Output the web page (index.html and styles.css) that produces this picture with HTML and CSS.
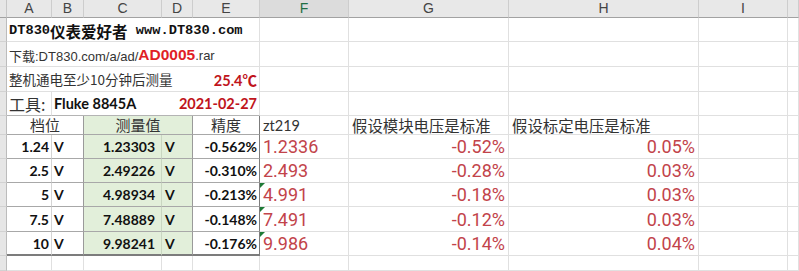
FILE: index.html
```html
<!DOCTYPE html>
<html lang="zh-CN">
<head>
<meta charset="utf-8">
<title>DT830</title>
<link rel="stylesheet" href="styles.css">
</head>
<body>
<div class="sheet">
  <!-- column headers -->
  <div class="corner"></div>
  <div class="ch"><span>A</span></div>
  <div class="ch"><span>B</span></div>
  <div class="ch"><span>C</span></div>
  <div class="ch"><span>D</span></div>
  <div class="ch"><span>E</span></div>
  <div class="ch sel"><span>F</span></div>
  <div class="ch"><span>G</span></div>
  <div class="ch"><span>H</span></div>
  <div class="ch"><span>I</span></div>
  <div class="ch"></div>

  <!-- row 1 -->
  <div class="rh"></div>
  <div class="c span5 title"><span class="mono">DT830</span><span>仪表爱好者</span><span class="mono">&nbsp;www.DT830.com</span></div>
  <div class="c"></div><div class="c"></div><div class="c"></div><div class="c"></div><div class="c"></div>

  <!-- row 2 -->
  <div class="rh"></div>
  <div class="c span5 dl"><span>下载:DT830.com/a/ad/</span><span class="dl-red">AD0005</span><span>.rar</span></div>
  <div class="c"></div><div class="c"></div><div class="c"></div><div class="c"></div><div class="c"></div>

  <!-- row 3 -->
  <div class="rh"></div>
  <div class="c span5 split"><span class="note">整机通电至少10分钟后测量</span><span class="hot">25.4℃</span></div>
  <div class="c"></div><div class="c"></div><div class="c"></div><div class="c"></div><div class="c"></div>

  <!-- row 4 -->
  <div class="rh"></div>
  <div class="c tb-top tool">工具:</div>
  <div class="c span4 tb-top split"><span class="model">Fluke 8845A</span><span class="hot">2021-02-27</span></div>
  <div class="c"></div><div class="c"></div><div class="c"></div><div class="c"></div><div class="c"></div>

  <!-- row 5 -->
  <div class="rh"></div>
  <div class="c span2 t th bdark">档位</div>
  <div class="c span2 t th green bdark">测量值</div>
  <div class="c t th bedge">精度</div>
  <div class="c lbl">zt219</div>
  <div class="c cjk">假设模块电压是标准</div>
  <div class="c cjk">假设标定电压是标准</div>
  <div class="c"></div><div class="c"></div>

  <!-- row 6 -->
  <div class="rh"></div>
  <div class="c t num blight">1.24</div>
  <div class="c t unit bdark">V</div>
  <div class="c t num green meas bgreen">1.23303</div>
  <div class="c t unit green unit-d bdark">V</div>
  <div class="c t num bedge">-0.562%</div>
  <div class="c red">1.2336</div>
  <div class="c red right">-0.52%</div>
  <div class="c red right">0.05%</div>
  <div class="c"></div><div class="c"></div>

  <!-- row 7 -->
  <div class="rh"></div>
  <div class="c t num blight">2.5</div>
  <div class="c t unit bdark">V</div>
  <div class="c t num green meas bgreen">2.49226</div>
  <div class="c t unit green unit-d bdark">V</div>
  <div class="c t num bedge">-0.310%</div>
  <div class="c red">2.493</div>
  <div class="c red right">-0.28%</div>
  <div class="c red right">0.03%</div>
  <div class="c"></div><div class="c"></div>

  <!-- row 8 -->
  <div class="rh"></div>
  <div class="c t num blight">5</div>
  <div class="c t unit bdark">V</div>
  <div class="c t num green meas bgreen">4.98934</div>
  <div class="c t unit green unit-d bdark">V</div>
  <div class="c t num bedge">-0.213%</div>
  <div class="c red tri">4.991</div>
  <div class="c red right">-0.18%</div>
  <div class="c red right">0.03%</div>
  <div class="c"></div><div class="c"></div>

  <!-- row 9 -->
  <div class="rh"></div>
  <div class="c t num blight">7.5</div>
  <div class="c t unit bdark">V</div>
  <div class="c t num green meas bgreen">7.48889</div>
  <div class="c t unit green unit-d bdark">V</div>
  <div class="c t num bedge">-0.148%</div>
  <div class="c red tri">7.491</div>
  <div class="c red right">-0.12%</div>
  <div class="c red right">0.03%</div>
  <div class="c"></div><div class="c"></div>

  <!-- row 10 -->
  <div class="rh"></div>
  <div class="c t last num blight">10</div>
  <div class="c t last unit bdark">V</div>
  <div class="c t last num green meas bgreen">9.98241</div>
  <div class="c t last unit green unit-d bdark">V</div>
  <div class="c t last num bedge">-0.176%</div>
  <div class="c red tri">9.986</div>
  <div class="c red right">-0.14%</div>
  <div class="c red right">0.04%</div>
  <div class="c"></div><div class="c"></div>

  <!-- row 11 -->
  <div class="rh"></div>
  <div class="c"></div><div class="c"></div><div class="c"></div><div class="c"></div><div class="c"></div>
  <div class="c"></div><div class="c"></div><div class="c"></div><div class="c"></div><div class="c"></div>
</div>
</body>
</html>
```

FILE: styles.css
```css
html, body {
  margin: 0;
  padding: 0;
  background: #ffffff;
  overflow: hidden;
}

body {
  font-family: "Liberation Sans", "Noto Sans CJK SC", sans-serif;
  color: #222;
}

.sheet {
  display: grid;
  width: 799px;
  height: 271px;
  grid-template-columns: 7px 45px 32px 78px 31px 67px 89px 160px 190px 89px 1fr;
  grid-template-rows: 18px 24px 25px 25px 24px 19px 24px 24px 24px 25px 24px 1fr;
}

.sheet > div {
  box-sizing: border-box;
  min-width: 0;
  white-space: nowrap;
}

/* headers */
.corner {
  background: #e6e6e6;
  border-right: 1px solid #c6c6c6;
  border-bottom: 1px solid #a2a2a2;
}

.ch {
  background: #e8e8e8;
  border-right: 1px solid #cdcdcd;
  border-bottom: 1px solid #a2a2a2;
  display: flex;
  justify-content: center;
  align-items: flex-start;
  font-family: "Liberation Sans", sans-serif;
  font-size: 14px;
  line-height: 16px;
  color: #444;
}

.ch.sel {
  background: #dcdcdc;
  color: #1f6e43;
}

.rh {
  background: #e6e6e6;
  border-right: 1px solid #bcbcbc;
  border-bottom: 1px solid #d2d2d2;
}

/* cells */
.c {
  border-right: 1px solid #e0e0e0;
  border-bottom: 1px solid #e0e0e0;
  display: flex;
  align-items: center;
  padding: 0 2px;
}

.span2 { grid-column: span 2; }
.span4 { grid-column: span 4; }
.span5 { grid-column: span 5; }

.title {
  font-family: "Noto Sans CJK SC", sans-serif;
  font-weight: 700;
  font-size: 15.5px;
  color: #111;
  padding-left: 2px;
  padding-top: 2px;
}

.mono {
  font-family: "Liberation Mono", monospace;
  font-weight: 700;
  font-size: 13.7px;
}

.dl {
  font-size: 13px;
  color: #333;
  padding-top: 2px;
}

.dl-red {
  font-weight: 700;
  font-size: 15.5px;
  color: #e01e26;
}

.split {
  justify-content: space-between;
}

.note {
  font-family: "Noto Sans CJK SC", sans-serif;
  font-size: 13.5px;
  color: #333;
}

.hot {
  font-family: "Lato", "Noto Sans CJK SC", sans-serif;
  font-weight: 700;
  font-size: 14.5px;
  color: #c0141c;
}

.tool {
  font-family: "Noto Sans CJK SC", sans-serif;
  font-size: 16px;
  color: #333;
}

.model {
  font-family: "Lato", sans-serif;
  font-weight: 700;
  font-size: 14.5px;
  color: #111;
}

.tb-top {
  border-bottom-color: #b4b4b4;
}

/* table A5:E10 */
.t {
  border-bottom-color: #a8a8a8;
}

.t.last {
  border-bottom: 2px solid #7c7c7c;
}

.blight { border-right-color: #d4d4d4; }
.bdark { border-right-color: #9a9a9a; }
.bgreen { border-right-color: #c9d6c1; }
.bedge { border-right-color: #7c7c7c; }

.green {
  background: #e2efda;
}

.th {
  justify-content: center;
  align-items: flex-end;
  font-family: "Noto Sans CJK SC", sans-serif;
  font-size: 15px;
  line-height: 18px;
  color: #333;
}

.num {
  justify-content: flex-end;
  font-family: "Lato", sans-serif;
  font-weight: 700;
  font-size: 14px;
  color: #111;
}

.meas {
  padding-right: 6px;
}

.unit {
  font-family: "Lato", sans-serif;
  font-weight: 700;
  font-size: 14px;
  color: #111;
}

.unit-d {
  padding-left: 3px;
}

/* right side */
.lbl {
  font-family: "Lato", sans-serif;
  font-size: 14.5px;
  color: #333;
  padding-left: 3px;
}

.cjk {
  font-family: "Noto Sans CJK SC", sans-serif;
  font-size: 15.4px;
  line-height: 18px;
  color: #333;
  padding-left: 3px;
}

.red {
  font-family: "Roboto", sans-serif;
  font-weight: 400;
  font-size: 18px;
  color: #c2434a;
  padding-left: 3px;
}

.red.right {
  justify-content: flex-end;
  padding-right: 3px;
}

.tri {
  position: relative;
}

.tri::before {
  content: "";
  position: absolute;
  top: 0;
  left: 0;
  border-top: 5px solid #1e7a36;
  border-right: 5px solid transparent;
}
```
